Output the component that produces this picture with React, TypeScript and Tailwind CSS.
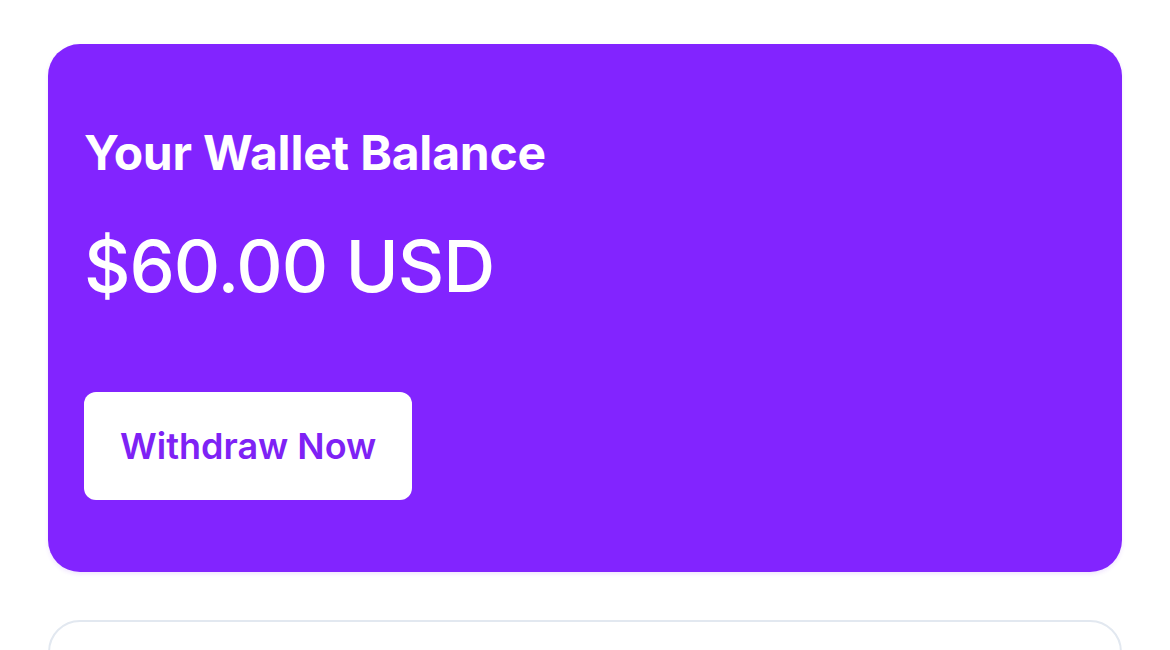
export default function App() {
  return (
    <div
      className="min-h-screen bg-white px-12 pt-11"
      style={{ fontFamily: "Inter, 'Noto Sans', sans-serif" }}
    >
      <div className="flex flex-col items-start rounded-[32px] bg-[#8224ff] px-9 pt-[80px] pb-[72px] text-white shadow-[0_2px_4px_rgba(130,36,255,0.12)]">
        <h1 className="text-[48px] font-bold leading-[58px] tracking-[-0.2px]">Your Wallet Balance</h1>
        <p className="mt-[44px] text-[72px] font-medium leading-[80px] tracking-[-1px]">$60.00 USD</p>
        <button className="mt-[86px] rounded-xl bg-white px-9 py-[30px] text-[36px] font-semibold leading-[48px] text-[#7e22f5]">
          Withdraw Now
        </button>
      </div>
      <div className="mt-12 h-40 rounded-[32px] border-2 border-[#e2e8f0] bg-white" />
    </div>
  );
}
